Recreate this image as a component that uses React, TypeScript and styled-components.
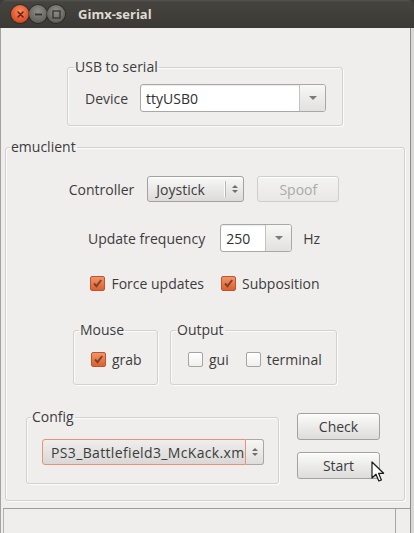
import styled, { createGlobalStyle } from "styled-components";

const GlobalStyle = createGlobalStyle`
  html, body { margin: 0; padding: 0; }
  body {
    background: #3c3b37;
    font-family: "Open Sans", "Noto Sans", sans-serif;
    font-size: 14px;
    color: #3c3c3c;
  }
`;

const Window = styled.div`
  position: relative;
  width: 414px;
  height: 533px;
  display: flex;
  flex-direction: column;
  overflow: hidden;
`;

const TitleBar = styled.header`
  flex: none;
  height: 28px;
  box-sizing: border-box;
  display: flex;
  align-items: center;
  padding-left: 11px;
  background: linear-gradient(#56544f 0, #45443e 2px, #3a3935 100%);
  border-radius: 6px 6px 0 0;
`;

const WinButton = styled.span<{ $close?: boolean }>`
  width: 18px;
  height: 18px;
  border-radius: 50%;
  display: flex;
  align-items: center;
  justify-content: center;
  background: ${(p) =>
    p.$close
      ? "radial-gradient(circle at 50% 35%, #f78c5f, #df5129 65%, #a93818)"
      : "radial-gradient(circle at 50% 35%, #8f8e88, #676661 65%, #4b4a45)"};
  box-shadow: 0 0 0 1px rgba(0, 0, 0, 0.3);
`;

const Title = styled.span`
  margin-left: 13px;
  font-weight: bold;
  font-size: 13px;
  color: #dfdbd2;
`;

const Body = styled.main`
  flex: 1;
  display: flex;
  flex-direction: column;
  background: #efeeed;
  box-shadow: inset 1px 0 #a3a29f, inset -3px 0 #d9d8d6, inset -4px 0 #8e8d8a;
`;

const Frame = styled.fieldset`
  margin: 0;
  min-inline-size: 0;
  box-sizing: border-box;
  border: 1px solid #d2d1cf;
  border-radius: 3px;
  box-shadow: inset 1px 1px #fbfbfb, 1px 1px #fbfbfb;
`;

const Legend = styled.legend`
  padding: 0 1px;
  line-height: 20px;
`;

const UsbFrame = styled(Frame)`
  width: 276px;
  margin: 29px 0 0 67px;
  padding: 7px 16px 13px 6px;
`;

const EmuFrame = styled(Frame)`
  width: 400px;
  margin: 11px 0 0 5px;
  padding: 19px 4px 16px 4px;
`;

const SmallFrame = styled(Frame)<{ $w: number }>`
  width: ${(p) => p.$w}px;
  padding: 9px 5px 15px 5px;
`;

const ConfigFrame = styled(Frame)`
  width: 253px;
  padding: 12px 4px 18px 4px;
`;

const Stack = styled.div`
  display: flex;
  flex-direction: column;
  align-items: center;
`;

const Row = styled.div<{ $gap?: number; $mt?: number; $h?: number; $shift?: number }>`
  display: flex;
  align-items: center;
  gap: ${(p) => p.$gap ?? 0}px;
  margin-top: ${(p) => p.$mt ?? 0}px;
  margin-right: ${(p) => (p.$shift ? p.$shift * 2 : 0)}px;
  height: ${(p) => (p.$h ? `${p.$h}px` : "auto")};
`;

const TopRow = styled(Row)`
  align-items: flex-start;
`;

const DeviceRow = styled.div`
  display: flex;
  align-items: center;
  height: 28px;
  padding-left: 11px;
`;

const Label = styled.span`
  white-space: nowrap;
`;

const ComboEntry = styled.div<{ $w: number }>`
  width: ${(p) => p.$w}px;
  height: 28px;
  box-sizing: border-box;
  margin-left: auto;
  display: flex;
  border: 1px solid #a9a8a6;
  border-radius: 3px;
  background: #fff;
  overflow: hidden;
  box-shadow: inset 0 1px 1px rgba(0, 0, 0, 0.08);
`;

const EntryText = styled.div`
  flex: 1;
  display: flex;
  align-items: center;
  padding-left: 5px;
  color: #2f2f2f;
`;

const DropButton = styled.div`
  width: 25px;
  display: flex;
  align-items: center;
  justify-content: center;
  border-left: 1px solid #c4c3c1;
  background: linear-gradient(#f7f7f6, #e2e1df);
`;

const DownTriangle = styled.span`
  width: 0;
  height: 0;
  border-left: 4px solid transparent;
  border-right: 4px solid transparent;
  border-top: 4px solid #7c7b78;
`;

const ComboButton = styled.div<{ $w: number }>`
  width: ${(p) => p.$w}px;
  height: 26px;
  box-sizing: border-box;
  display: flex;
  align-items: center;
  border: 1px solid #a3a2a0;
  border-radius: 3px;
  background: linear-gradient(#f8f8f7, #dcdbd9);
  box-shadow: inset 0 1px #fff;
  overflow: hidden;
`;

const ComboText = styled.div`
  flex: 1;
  padding-left: 8px;
  white-space: nowrap;
  overflow: hidden;
`;

const ArrowPart = styled.div<{ $w: number }>`
  flex: none;
  width: ${(p) => p.$w}px;
  height: 16px;
  display: flex;
  flex-direction: column;
  align-items: center;
  justify-content: center;
  gap: 2px;
  border-left: 1px solid #b8b7b5;
  box-shadow: -1px 0 #fbfbfb;
`;

const Tri = styled.span<{ $up?: boolean }>`
  width: 0;
  height: 0;
  border-left: 3px solid transparent;
  border-right: 3px solid transparent;
  ${(p) => (p.$up ? "border-bottom: 3px solid #6f6e6b;" : "border-top: 3px solid #6f6e6b;")}
`;

/* the config combo: focused text part with its orange ring, then the arrows */
const SplitCombo = styled.div`
  width: 222px;
  height: 26px;
  margin-left: 11px;
  display: flex;
`;

const FocusText = styled.div`
  flex: 1;
  min-width: 0;
  box-sizing: border-box;
  display: flex;
  align-items: center;
  padding: 0 3px 0 8px;
  white-space: nowrap;
  overflow: hidden;
  letter-spacing: 0.35px;
  border: 1px solid #ea8f78;
  border-radius: 3px 0 0 3px;
  background: linear-gradient(#efeeec, #d9d8d6);
`;

const SideArrows = styled.div`
  width: 18px;
  box-sizing: border-box;
  display: flex;
  flex-direction: column;
  align-items: center;
  justify-content: center;
  gap: 2px;
  border: 1px solid #a9a8a6;
  border-left: none;
  border-radius: 0 3px 3px 0;
  background: linear-gradient(#f6f6f5, #dedddb);
`;

const PushButton = styled.button<{ $w: number; $h: number }>`
  width: ${(p) => p.$w}px;
  height: ${(p) => p.$h}px;
  padding: 0;
  font: inherit;
  color: #3c3c3c;
  border: 1px solid #a3a2a0;
  border-radius: 3px;
  background: linear-gradient(#fbfbfa, #dddcda);
  box-shadow: inset 0 1px #fff;

  &:disabled {
    color: #abaaa8;
    border-color: #cfcecc;
    background: linear-gradient(#f3f3f2, #e9e8e6);
  }
`;

const ButtonColumn = styled.div`
  display: flex;
  flex-direction: column;
  gap: 12px;
  margin-top: 6px;
`;

const CheckLabel = styled.label<{ $ml?: number }>`
  display: inline-flex;
  align-items: center;
  gap: 6px;
  margin-left: ${(p) => p.$ml ?? 0}px;
  height: 20px;
`;

const Box = styled.span<{ $on?: boolean }>`
  width: 15px;
  height: 15px;
  box-sizing: border-box;
  display: flex;
  align-items: center;
  justify-content: center;
  border-radius: 2px;
  border: 1px solid ${(p) => (p.$on ? "#bd5630" : "#a5a4a2")};
  background: ${(p) =>
    p.$on ? "linear-gradient(#f29468, #dc5f30)" : "linear-gradient(#ffffff, #f0efee)"};
`;

const StatusBar = styled.footer`
  flex: 1;
  display: flex;
  margin: 7px 4px 0 3px;
  border-top: 1px solid #9e9d9a;
  box-shadow: inset 1px 0 #b3b2af;
`;

const StatusCell = styled.div`
  flex: 1;
  border-right: 1px solid #a8a7a4;
`;

const Grip = styled.div`
  width: 14px;
`;

const Cursor = styled.svg`
  position: absolute;
  left: 371px;
  top: 461px;
`;

const CheckBox = ({ on, label, ml }: { on?: boolean; label: string; ml?: number }) => (
  <CheckLabel $ml={ml}>
    <Box $on={on}>
      {on && (
        <svg width="11" height="11" viewBox="0 0 11 11">
          <path d="M2 5.5 L4.5 8.2 L9.2 2" fill="none" stroke="#5a3020" strokeOpacity="0.75" strokeWidth="2" />
        </svg>
      )}
    </Box>
    <Label>{label}</Label>
  </CheckLabel>
);

const App = () => {
  return (
    <Window>
      <GlobalStyle />
      <TitleBar>
        <WinButton $close>
          <svg width="9" height="9" viewBox="0 0 9 9">
            <path d="M2 2 L7 7 M7 2 L2 7" stroke="#6a2412" strokeWidth="1.6" strokeLinecap="round" />
          </svg>
        </WinButton>
        <WinButton>
          <svg width="9" height="9" viewBox="0 0 9 9">
            <path d="M1 4.5 H8" stroke="#35342f" strokeWidth="1.8" />
          </svg>
        </WinButton>
        <WinButton>
          <svg width="9" height="9" viewBox="0 0 9 9">
            <rect x="1" y="1" width="7" height="7" fill="none" stroke="#35342f" strokeWidth="1.3" />
          </svg>
        </WinButton>
        <Title>Gimx-serial</Title>
      </TitleBar>
      <Body>
        <UsbFrame>
          <Legend>USB to serial</Legend>
          <DeviceRow>
            <Label>Device</Label>
            <ComboEntry $w={186}>
              <EntryText>ttyUSB0</EntryText>
              <DropButton>
                <DownTriangle />
              </DropButton>
            </ComboEntry>
          </DeviceRow>
        </UsbFrame>

        <EmuFrame>
          <Legend>emuclient</Legend>
          <Stack>
            <Row $gap={13} $h={26} $shift={1}>
              <Label>Controller</Label>
              <ComboButton $w={97}>
                <ComboText>Joystick</ComboText>
                <ArrowPart $w={17}>
                  <Tri $up />
                  <Tri />
                </ArrowPart>
              </ComboButton>
              <PushButton $w={82} $h={26} disabled>
                Spoof
              </PushButton>
            </Row>

            <Row $mt={22} $h={28} $shift={1}>
              <Label>Update frequency</Label>
              <ComboEntry $w={72} style={{ marginLeft: 15, marginRight: 11 }}>
                <EntryText>250</EntryText>
                <DropButton>
                  <DownTriangle />
                </DropButton>
              </ComboEntry>
              <Label>Hz</Label>
            </Row>

            <Row $mt={21} $h={20} $gap={17}>
              <CheckBox on label="Force updates" />
              <CheckBox on label="Subposition" />
            </Row>

            <TopRow $mt={27} $gap={12}>
              <SmallFrame $w={85}>
                <Legend>Mouse</Legend>
                <Row $h={20}>
                  <CheckBox on label="grab" ml={12} />
                </Row>
              </SmallFrame>
              <SmallFrame $w={167}>
                <Legend>Output</Legend>
                <Row $h={20} $gap={17}>
                  <CheckBox label="gui" ml={12} />
                  <CheckBox label="terminal" />
                </Row>
              </SmallFrame>
            </TopRow>

            <TopRow $mt={22} $gap={18} $shift={2}>
              <ConfigFrame>
                <Legend>Config</Legend>
                <Row $h={26}>
                  <SplitCombo>
                    <FocusText>PS3_Battlefield3_McKack.xml</FocusText>
                    <SideArrows>
                      <Tri $up />
                      <Tri />
                    </SideArrows>
                  </SplitCombo>
                </Row>
              </ConfigFrame>
              <ButtonColumn>
                <PushButton $w={83} $h={27}>
                  Check
                </PushButton>
                <PushButton $w={83} $h={27}>
                  Start
                </PushButton>
              </ButtonColumn>
            </TopRow>
          </Stack>
        </EmuFrame>

        <StatusBar>
          <StatusCell />
          <Grip />
        </StatusBar>
      </Body>
      <Cursor width="14" height="22" viewBox="0 0 14 22">
        <path
          d="M1 1 L1 17 L5 13.2 L7.8 20 L10.4 18.9 L7.6 12.3 L12.6 12.3 Z"
          fill="#ffffff"
          stroke="#1a1a1a"
          strokeWidth="1.2"
          strokeLinejoin="round"
        />
      </Cursor>
    </Window>
  );
};

export default App;
